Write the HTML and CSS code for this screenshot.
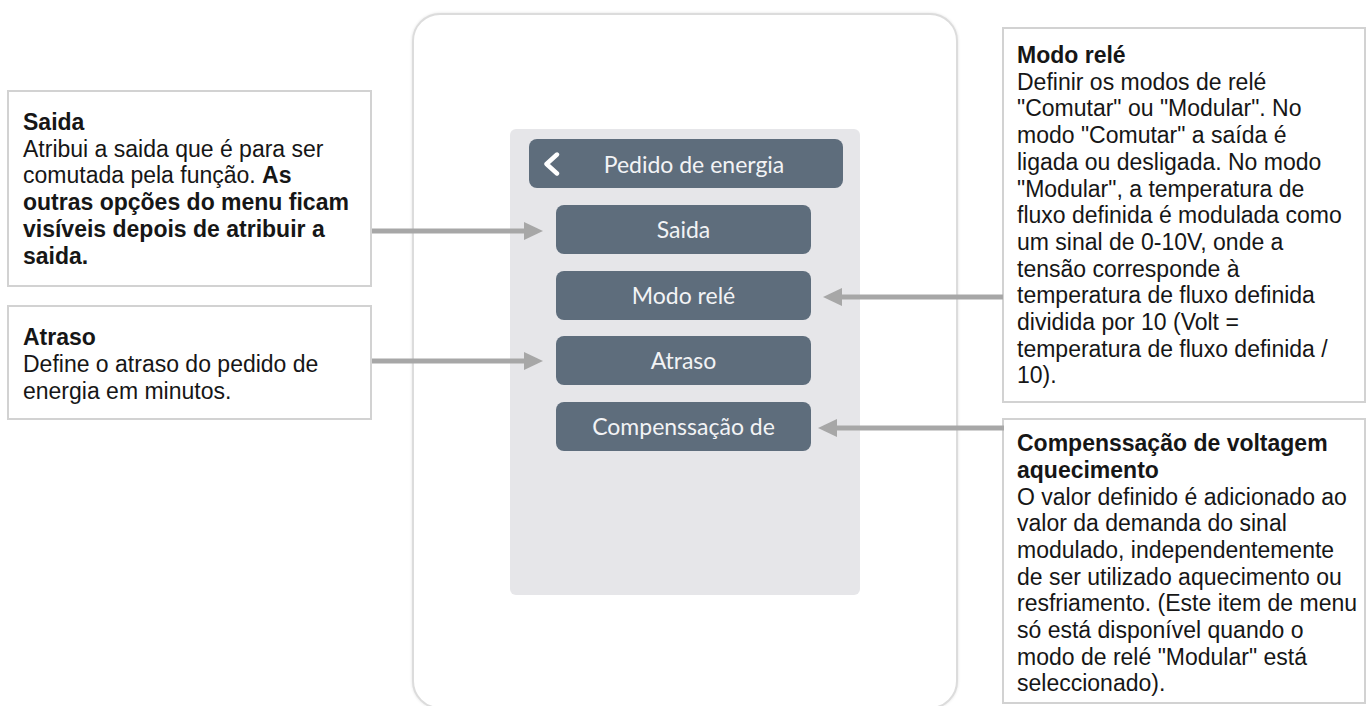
FILE: index.html
```html
<!DOCTYPE html>
<html>

<head>
	<title>Pedido de energia</title>
	<meta charset="utf-8">
	<link rel="stylesheet" href="styles.css">
</head>

<body>
	<div class="sheet">
		<div class="notes notes-left">
			<div class="note note-saida">
				<b class="note-title">Saida</b>
				Atribui a saida que é para ser comutada pela função. <b>As outras opções do menu ficam visíveis depois de atribuir a saida.</b>
			</div>
			<div class="note note-atraso">
				<b class="note-title">Atraso</b>
				Define o atraso do pedido de energia em minutos.
			</div>
		</div>

		<div class="device">
			<div class="screen">
				<div class="screen-head">
					<svg class="back" width="18" height="24" viewBox="0 0 18 24">
						<path d="M15 2.5 L4.5 12 L15 21.5" fill="none" stroke="#fff" stroke-width="4.4" stroke-linecap="round" stroke-linejoin="round"/>
					</svg>
					<span>Pedido de energia</span>
				</div>
				<div class="menu">
					<div class="menu-btn">Saida</div>
					<div class="menu-btn">Modo relé</div>
					<div class="menu-btn">Atraso</div>
					<div class="menu-btn">Compenssação de</div>
				</div>
			</div>
		</div>

		<div class="notes notes-right">
			<div class="note note-modo">
				<b class="note-title">Modo relé</b>
				Definir os modos de relé "Comutar" ou "Modular". No modo "Comutar" a saída é ligada ou desligada. No modo "Modular", a temperatura de fluxo definida é modulada como um sinal de 0-10V, onde a tensão corresponde à temperatura de fluxo definida dividida por 10 (Volt = temperatura de fluxo definida / 10).
			</div>
			<div class="note note-comp">
				<b class="note-title">Compenssação de voltagem aquecimento</b>
				O valor definido é adicionado ao valor da demanda do sinal modulado, independentemente de ser utilizado aquecimento ou resfriamento. (Este item de menu só está disponível quando o modo de relé "Modular" está seleccionado).
			</div>
		</div>

		<!-- pointer arrows from the notes to the menu entries -->
		<svg class="arrows" width="1369" height="706" viewBox="0 0 1369 706">
			<g fill="#a7a7a7">
				<rect x="372" y="228.5" width="154" height="5"/>
				<polygon points="524,222 543,231 524,240"/>
				<rect x="372" y="358.5" width="154" height="5"/>
				<polygon points="524,352 543,361 524,370"/>
				<rect x="840" y="294.5" width="163" height="5"/>
				<polygon points="842,288 823,297 842,306"/>
				<rect x="835" y="425.5" width="169" height="5"/>
				<polygon points="837,419 818,428 837,437"/>
			</g>
		</svg>
	</div>
</body>

</html>
```

FILE: styles.css
```css
body {
	margin: 0;
	background: #fff;
	font-family: "Liberation Sans", Arial, sans-serif;
	color: #161616;
}

.sheet {
	position: relative;
	display: flex;
	align-items: flex-start;
	width: 1369px;
	height: 706px;
	padding-left: 7px;
	box-sizing: border-box;
	overflow: hidden;
}

.notes {
	display: flex;
	flex-direction: column;
}

.notes-left {
	width: 365px;
	padding-top: 90px;
	gap: 18px;
}

.notes-right {
	width: 364px;
	margin-left: 44px;
	padding-top: 27px;
	gap: 15px;
}

.note {
	border: 2px solid #d2d2d2;
	font-size: 23px;
	line-height: 26.7px;
	background: #fff;
}

.note-title {
	display: block;
}

.note-saida {
	padding: 17px 14px 16px;
}

.note-atraso {
	padding: 17px 14px 14px;
}

.note-modo {
	padding: 13px 17px 12px 13px;
}

.note-comp {
	padding: 10px 5px 5px 13px;
}

/* the controller */
.device {
	flex: none;
	width: 546px;
	height: 696px;
	margin: 13px 0 0 40px;
	box-sizing: border-box;
	border: 2px solid #dcdcdc;
	border-radius: 28px;
	box-shadow: 0 0 3px rgba(0, 0, 0, 0.12);
	background: #fff;
}

.screen {
	width: 350px;
	height: 466px;
	margin: 114px 0 0 96px;
	padding-top: 10px;
	box-sizing: border-box;
	background: #e6e6e9;
	border-radius: 6px;
}

.screen-head {
	display: grid;
	grid-template-columns: 32px 1fr 16px;
	align-items: center;
	width: 314px;
	height: 49px;
	margin-left: 19px;
	background: #5e6d7c;
	border-radius: 8px;
	color: #f2f3f5;
	font-family: Lato, "Noto Sans", sans-serif;
	font-size: 23px;
}

.screen-head .back {
	margin-left: 13px;
}

.screen-head span {
	text-align: center;
}

.menu {
	display: flex;
	flex-direction: column;
	gap: 16.5px;
	margin: 17px 0 0 46px;
}

.menu-btn {
	width: 255px;
	height: 49px;
	line-height: 49px;
	text-align: center;
	background: #5e6d7c;
	border-radius: 8px;
	color: #f2f3f5;
	font-family: Lato, "Noto Sans", sans-serif;
	font-size: 23px;
}

.arrows {
	position: absolute;
	left: 0;
	top: 0;
	pointer-events: none;
}
```
